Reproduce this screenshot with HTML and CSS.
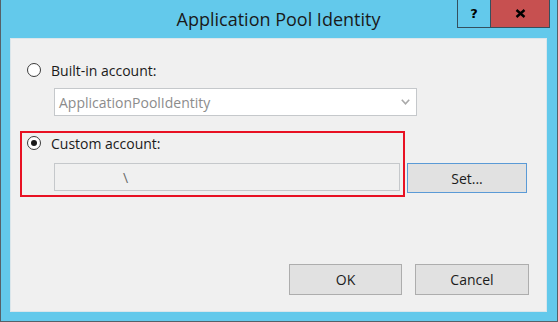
FILE: index.html
```html
<!DOCTYPE html>
<html lang="en">
<head>
    <meta charset="UTF-8">
    <meta name="viewport" content="width=device-width, initial-scale=1.0">
    <title>Application Pool Identity</title>
    <link rel="stylesheet" href="styles.css">
</head>
<body>
    <div class="window">
        <div class="titlebar">
            <span></span>
            <h1 class="title">Application Pool Identity</h1>
            <div class="caption-buttons">
                <button class="caption-btn help" type="button">?</button>
                <button class="caption-btn close" type="button" aria-label="Close">
                    <svg width="11" height="9" viewBox="0 0 11 9">
                        <path d="M1.5 1 L9.5 8 M9.5 1 L1.5 8" stroke="#000" stroke-width="2.4" fill="none"/>
                    </svg>
                </button>
            </div>
        </div>

        <div class="content">
            <div class="group">
                <div class="radio-row">
                    <span class="radio"></span>
                    <span>Built-in account:</span>
                </div>
                <div class="combo">
                    <span>ApplicationPoolIdentity</span>
                    <svg class="chevron" width="9" height="6" viewBox="0 0 9 6">
                        <polyline points="0.8,0.8 4.5,4.8 8.2,0.8" fill="none" stroke="#a9a9a9" stroke-width="1.6"/>
                    </svg>
                </div>
            </div>

            <div class="custom-row">
                <div class="group highlight">
                    <div class="radio-row">
                        <span class="radio checked"></span>
                        <span>Custom account:</span>
                    </div>
                    <div class="textbox">\</div>
                </div>
                <button class="btn default" type="button">Set...</button>
            </div>

            <div class="actions">
                <button class="btn" type="button">OK</button>
                <button class="btn" type="button">Cancel</button>
            </div>
        </div>
    </div>
</body>
</html>
```

FILE: styles.css
```css
:root {
    --frame: #63c9eb;
    --face: #f0f0f0;
    --text: #1b1b1b;
    --btn-face: #e1e1e1;
    --btn-border: #adadad;
}

* {
    margin: 0;
    padding: 0;
    box-sizing: border-box;
}

body {
    font-family: 'Open Sans', 'Noto Sans', sans-serif;
    font-size: 14px;
    color: var(--text);
    background: var(--frame);
}

.window {
    width: 558px;
    height: 322px;
    background: var(--frame);
    border: 1px solid #566168;
    border-top: none;
    padding: 0 10px 9px 9px;
    display: flex;
    flex-direction: column;
}

/* title bar */

.titlebar {
    height: 38px;
    flex: none;
    display: grid;
    grid-template-columns: 1fr auto 1fr;
}

.title {
    font-size: 18px;
    font-weight: 400;
    line-height: 38px;
    color: #1a1a1a;
}

.caption-buttons {
    justify-self: end;
    align-self: start;
    display: flex;
    margin-right: -3px;
    height: 28px;
    border: 1px solid #34505e;
    border-top: none;
}

.caption-btn {
    border: none;
    font-family: 'DejaVu Sans', sans-serif;
    font-weight: 700;
    color: #000;
    cursor: default;
    display: flex;
    align-items: center;
    justify-content: center;
}

.caption-btn.help {
    width: 33px;
    background: var(--frame);
    border-right: 1px solid #34505e;
    font-size: 13px;
}

.caption-btn.close {
    width: 58px;
    background: #c75050;
}

/* dialog body */

.content {
    flex: 1;
    background: var(--face);
    border: 1px solid #dbe6eb;
    padding: 19px 17px 16px 9px;
    display: flex;
    flex-direction: column;
}

.group {
    width: 385px;
    border: 2px solid transparent;
    padding: 0 3px 4px 5px;
}

.group.highlight {
    border-color: #e81123;
}

.radio-row {
    height: 20px;
    display: flex;
    align-items: center;
    gap: 10px;
}

.radio {
    width: 14px;
    height: 14px;
    border-radius: 50%;
    border: 1px solid #3b3b3b;
    background: #fff;
    display: flex;
    align-items: center;
    justify-content: center;
}

.radio.checked::after {
    content: '';
    width: 6px;
    height: 6px;
    border-radius: 50%;
    background: #1a1a1a;
}

.combo,
.textbox {
    margin-left: 27px;
    height: 28px;
    border: 1px solid #c5c8cb;
    display: flex;
    align-items: center;
}

.combo {
    margin-top: 8px;
    width: 363px;
    background: #fff;
    color: #8c8c8c;
    padding: 0 6px 0 4px;
    justify-content: space-between;
}

.textbox {
    margin-top: 10px;
    background: var(--face);
    color: #6b6b6b;
    padding-left: 68px;
}

.custom-row {
    display: flex;
    align-items: flex-end;
    gap: 2px;
    margin-top: 9px;
}

.btn {
    font-family: inherit;
    font-size: 14px;
    color: var(--text);
    background: var(--btn-face);
    border: 1px solid var(--btn-border);
    height: 31px;
    width: 113px;
    cursor: default;
}

.btn.default {
    width: 120px;
    height: 30px;
    margin-bottom: 4px;
    border-color: #5a9ad6;
}

.actions {
    margin-top: auto;
    display: flex;
    justify-content: flex-end;
    gap: 13px;
}

.actions .btn:last-child {
    width: 114px;
}
```
